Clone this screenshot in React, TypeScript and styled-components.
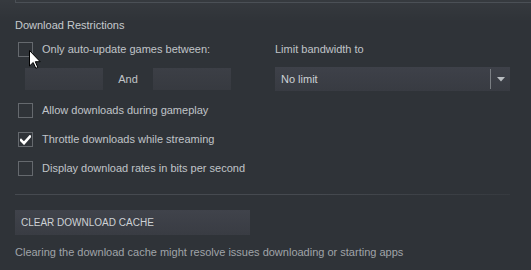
import React from "react";
import styled, { createGlobalStyle } from "styled-components";

const GlobalStyle = createGlobalStyle`
  html, body {
    margin: 0;
    padding: 0;
    background: #2f3338;
  }
  body {
    width: 531px;
    height: 270px;
    overflow: hidden;
    font-family: Arial, "Liberation Sans", sans-serif;
    font-size: 11px;
  }
  * { box-sizing: border-box; }
`;

const Page = styled.div`
  position: relative;
  width: 531px;
  height: 270px;
  padding: 0 21px 0 15px;
  background:
    linear-gradient(to bottom, rgba(255, 255, 255, 0.035) 0px, rgba(255, 255, 255, 0) 22px),
    #2f3338;
`;

const TopEdge = styled.div`
  height: 3px;
  margin-right: -21px;
  border-left: 1px solid #4b5056;
  border-bottom: 1px solid #4b5056;
`;

const SectionTitle = styled.div`
  margin-top: 15px;
  height: 14px;
  line-height: 14px;
  color: #c6cace;
`;

const Columns = styled.div`
  display: grid;
  grid-template-columns: 260px 235px;
  margin-top: 10px;
`;

const LeftCol = styled.div`
  display: flex;
  flex-direction: column;
  padding-left: 3px;
`;

const RightCol = styled.div`
  display: flex;
  flex-direction: column;
`;

const CheckRow = styled.div<{ $top?: number }>`
  display: flex;
  align-items: center;
  gap: 9px;
  height: 15px;
  margin-top: ${(p) => p.$top ?? 0}px;
  color: #c0c4c8;
  line-height: 15px;
  white-space: nowrap;
`;

const Box = styled.div`
  flex: none;
  width: 15px;
  height: 15px;
  border: 1px solid #65696e;
  display: flex;
  align-items: center;
  justify-content: center;
`;

const TimeRow = styled.div`
  display: flex;
  align-items: center;
  margin-top: 11px;
  padding-left: 7px;
  height: 22px;
`;

const TimeInput = styled.div`
  width: 78px;
  height: 22px;
  background: linear-gradient(to bottom, #3c3f46 0%, #373a40 100%);
`;

const AndLabel = styled.div`
  width: 50px;
  text-align: center;
  color: #c0c4c8;
`;

const FieldLabel = styled.div`
  height: 15px;
  line-height: 15px;
  color: #c0c4c8;
`;

const Select = styled.div`
  margin-top: 10px;
  height: 24px;
  display: flex;
  align-items: center;
  background: linear-gradient(to bottom, #3e4149 0%, #383b42 100%);
  color: #cdd1d5;
`;

const SelectValue = styled.div`
  flex: 1;
  padding-left: 6px;
`;

const SelectDivider = styled.div`
  width: 1px;
  height: 20px;
  background: #7a7e83;
`;

const SelectArrow = styled.div`
  width: 19px;
  display: flex;
  justify-content: center;
  align-items: center;
`;

const LowerChecks = styled.div`
  display: flex;
  flex-direction: column;
  padding-left: 3px;
  margin-top: 12px;
`;

const Separator = styled.div`
  margin-top: 18px;
  height: 1px;
  background: linear-gradient(to right, #464a50 0%, #464a50 60%, rgba(70, 74, 80, 0.3) 100%);
`;

const Button = styled.div`
  margin-top: 15px;
  width: 235px;
  height: 25px;
  display: flex;
  align-items: center;
  padding-left: 6px;
  font-size: 10px;
  color: #cdd1d5;
  background: linear-gradient(to bottom, #40434b 0%, #393c43 100%);
`;

const Description = styled.div`
  margin-top: 10px;
  height: 14px;
  line-height: 14px;
  color: #a0a4a9;
  white-space: nowrap;
`;

const Cursor = styled.svg`
  position: absolute;
  left: 29px;
  top: 50px;
`;

const Check = () => (
  <svg width="11" height="10" viewBox="0 0 11 10">
    <path d="M1 5.2 L4 8.2 L10 1.5" stroke="#ffffff" strokeWidth="2.6" fill="none" strokeLinecap="square" />
  </svg>
);

function CheckItem({ label, checked, top }: { label: string; checked?: boolean; top?: number }) {
  return (
    <CheckRow $top={top}>
      <Box>{checked && <Check />}</Box>
      <span>{label}</span>
    </CheckRow>
  );
}

export default function App() {
  return (
    <>
      <GlobalStyle />
      <Page>
        <TopEdge />
        <SectionTitle>Download Restrictions</SectionTitle>
        <Columns>
          <LeftCol>
            <CheckItem label="Only auto-update games between:" />
            <TimeRow>
              <TimeInput />
              <AndLabel>And</AndLabel>
              <TimeInput />
            </TimeRow>
          </LeftCol>
          <RightCol>
            <FieldLabel>Limit bandwidth to</FieldLabel>
            <Select>
              <SelectValue>No limit</SelectValue>
              <SelectDivider />
              <SelectArrow>
                <svg width="8" height="5" viewBox="0 0 8 5">
                  <path d="M0 0 L8 0 L4 4.5 Z" fill="#b9bdc1" />
                </svg>
              </SelectArrow>
            </Select>
          </RightCol>
        </Columns>
        <LowerChecks>
          <CheckItem label="Allow downloads during gameplay" />
          <CheckItem label="Throttle downloads while streaming" checked top={14} />
          <CheckItem label="Display download rates in bits per second" top={14} />
        </LowerChecks>
        <Separator />
        <Button>CLEAR DOWNLOAD CACHE</Button>
        <Description>Clearing the download cache might resolve issues downloading or starting apps</Description>
        <Cursor width="12" height="19" viewBox="0 0 12 19">
          <path
            d="M0.5 0.5 L0.5 16 L4.2 12.5 L6.8 18.3 L8.8 17.4 L6.3 11.7 L11.2 11.7 Z"
            fill="#ffffff"
            stroke="#000000"
            strokeWidth="1"
            strokeLinejoin="miter"
          />
        </Cursor>
      </Page>
    </>
  );
}
